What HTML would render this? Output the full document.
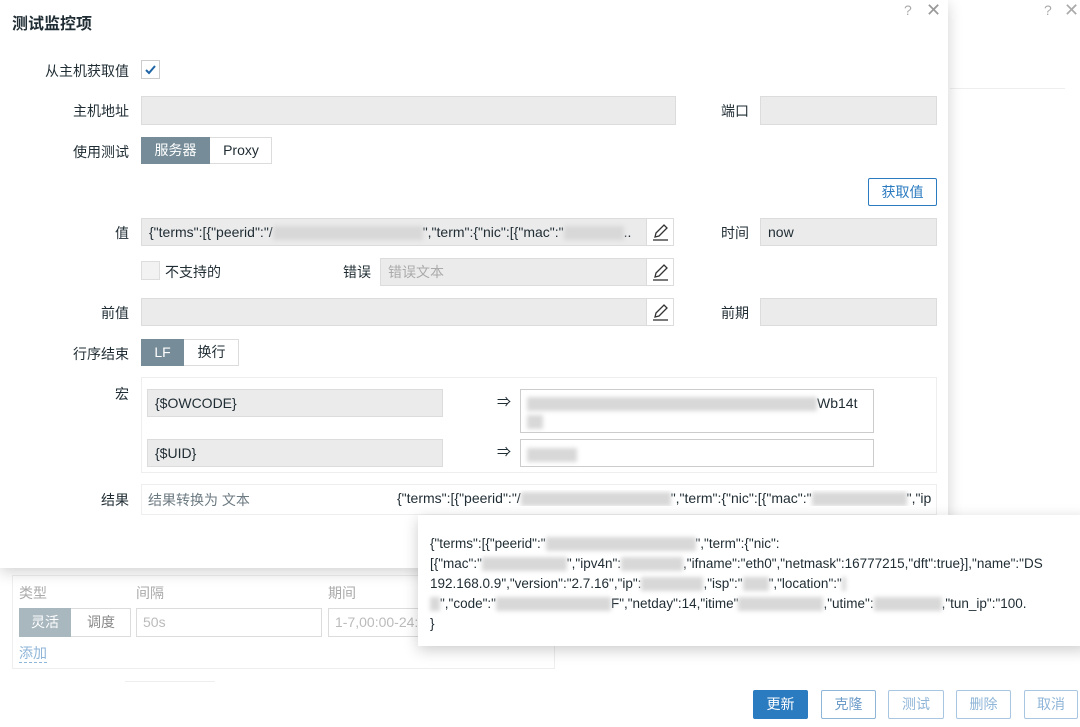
<!DOCTYPE html>
<html><head><meta charset="utf-8"><style>
*{box-sizing:border-box;margin:0;padding:0}
body{width:1080px;height:727px;overflow:hidden;background:#fff;font-family:"Liberation Sans","Noto Sans CJK SC",sans-serif;font-size:14px;color:#1f2c33;position:relative}
.a{position:absolute}
.lbl{position:absolute;text-align:right;width:120px;left:9px;font-size:14px;color:#1f2c33}
.inp{position:absolute;background:#ebebeb;border:1px solid #dcdcdc;height:28px;font-size:14px;line-height:26px;padding-left:7px;color:#1f2c33;white-space:nowrap;overflow:hidden}
.ed{position:absolute;width:28px;height:28px;border:1px solid #dcdcdc;background:#fff}
.btn{position:absolute;height:28px;border:1px solid #2b7bc0;color:#2b7bc0;background:#fff;border-radius:2px;text-align:center;line-height:26px;font-size:14px}
.blur{display:inline-block;height:14px;background:#d8d8d8;vertical-align:middle;filter:blur(2px)}
</style></head><body>
<div class="a" style="left:1044px;top:2px;color:#aaa;font-size:14px">?</div>
<div class="a" style="left:1064px;top:0px;color:#aaa;font-size:18px">✕</div>
<div class="a" style="left:950px;top:88px;width:115px;height:1px;background:#eee"></div>

<div class="a" style="left:12px;top:575px;width:543px;height:94px;border:1px solid #eee"></div>
<div class="a" style="left:19px;top:583px;color:#aaa">类型</div>
<div class="a" style="left:136px;top:583px;color:#aaa">间隔</div>
<div class="a" style="left:328px;top:583px;color:#aaa">期间</div>
<div class="a" style="left:19px;top:608px;width:112px;height:29px;border:1px solid #dcdcdc;background:#fff"></div>
<div class="a" style="left:19px;top:608px;width:52px;height:29px;background:#a9b7bf;color:#fff;text-align:center;line-height:29px">灵活</div>
<div class="a" style="left:71px;top:608px;width:60px;height:29px;color:#888;text-align:center;line-height:29px">调度</div>
<div class="a" style="left:136px;top:608px;width:186px;height:29px;border:1px solid #dcdcdc;color:#bbb;line-height:27px;padding-left:6px">50s</div>
<div class="a" style="left:328px;top:608px;width:100px;height:29px;border:1px solid #dcdcdc;color:#bbb;line-height:27px;padding-left:6px">1-7,00:00-24:</div>
<div class="a" style="left:19px;top:644px;color:#8fb5d8;border-bottom:1px dashed #8fb5d8;line-height:18px">添加</div>
<div class="a" style="left:125px;top:681px;width:90px;height:1px;background:#eee"></div>

<div class="a" style="left:753px;top:690px;width:55px;height:29px;background:#2b7bc0;color:#fff;text-align:center;line-height:29px;border-radius:2px">更新</div>
<div class="btn" style="left:821px;top:690px;width:55px;height:29px;color:#6d9cc9;border-color:#8fb5d8">克隆</div>
<div class="btn" style="left:888px;top:690px;width:56px;height:29px;color:#8fb5d8;border-color:#a8c6e2">测试</div>
<div class="btn" style="left:956px;top:690px;width:55px;height:29px;color:#8fb5d8;border-color:#a8c6e2">删除</div>
<div class="btn" style="left:1024px;top:690px;width:54px;height:29px;color:#8fb5d8;border-color:#a8c6e2">取消</div>

<div class="a" style="left:0;top:0;width:948px;height:568px;background:#fff;box-shadow:0 4px 14px rgba(0,0,0,.18)">
<div class="a" style="left:12px;top:10px;font-size:16px;font-weight:bold">测试监控项</div>
<div class="a" style="left:904px;top:2px;color:#aaa">?</div>
<div class="a" style="left:926px;top:0px;color:#999;font-size:18px">✕</div>

<div class="lbl" style="top:61px">从主机获取值</div>
<div class="a" style="left:141px;top:60px;width:19px;height:19px;border:1px solid #ccc;background:#fff"><svg width="17" height="17"><path d="M4 9l3 3 6-7" stroke="#1f65a6" stroke-width="2" fill="none"/></svg></div>

<div class="lbl" style="top:101px">主机地址</div>
<div class="inp" style="left:141px;top:96px;width:535px;height:29px"></div>
<div class="a" style="left:721px;top:101px">端口</div>
<div class="inp" style="left:760px;top:96px;width:177px;height:29px"></div>

<div class="lbl" style="top:142px">使用测试</div>
<div class="a" style="left:141px;top:137px;width:131px;height:27px;border:1px solid #dcdcdc"></div>
<div class="a" style="left:141px;top:137px;width:69px;height:27px;background:#768d99;color:#fff;text-align:center;line-height:27px">服务器</div>
<div class="a" style="left:210px;top:137px;width:62px;height:27px;text-align:center;line-height:27px">Proxy</div>

<div class="btn" style="left:868px;top:178px;width:69px">获取值</div>

<div class="lbl" style="top:223px">值</div>
<div class="inp" style="left:141px;top:218px;width:506px">{"terms":[{"peerid":"/<span class="blur" style="width:150px"></span>","term":{"nic":[{"mac":"<span class="blur" style="width:60px"></span>..</div>
<div class="ed" style="left:646px;top:218px"><svg width="26" height="26"><path d="M8 18l1-4 8-8 3 3-8 8z" fill="none" stroke="#333" stroke-width="1.3"/><path d="M6 21h15" stroke="#333" stroke-width="1.3"/></svg></div>
<div class="a" style="left:721px;top:223px">时间</div>
<div class="inp" style="left:760px;top:218px;width:177px">now</div>

<div class="a" style="left:141px;top:261px;width:19px;height:19px;border:1px solid #ddd;background:#f2f2f2"></div>
<div class="a" style="left:165px;top:262px">不支持的</div>
<div class="a" style="left:343px;top:262px">错误</div>
<div class="inp" style="left:380px;top:258px;width:267px;color:#aaa">错误文本</div>
<div class="ed" style="left:646px;top:258px"><svg width="26" height="26"><path d="M8 18l1-4 8-8 3 3-8 8z" fill="none" stroke="#333" stroke-width="1.3"/><path d="M6 21h15" stroke="#333" stroke-width="1.3"/></svg></div>

<div class="lbl" style="top:303px">前值</div>
<div class="inp" style="left:141px;top:298px;width:506px"></div>
<div class="ed" style="left:646px;top:298px"><svg width="26" height="26"><path d="M8 18l1-4 8-8 3 3-8 8z" fill="none" stroke="#333" stroke-width="1.3"/><path d="M6 21h15" stroke="#333" stroke-width="1.3"/></svg></div>
<div class="a" style="left:721px;top:303px">前期</div>
<div class="inp" style="left:760px;top:298px;width:177px"></div>

<div class="lbl" style="top:344px">行序结束</div>
<div class="a" style="left:141px;top:339px;width:98px;height:27px;border:1px solid #dcdcdc"></div>
<div class="a" style="left:141px;top:339px;width:43px;height:27px;background:#768d99;color:#fff;text-align:center;line-height:27px">LF</div>
<div class="a" style="left:184px;top:339px;width:55px;height:27px;text-align:center;line-height:27px">换行</div>

<div class="lbl" style="top:384px">宏</div>
<div class="a" style="left:141px;top:377px;width:796px;height:96px;border:1px solid #eee"></div>
<div class="inp" style="left:147px;top:389px;width:296px">{$OWCODE}</div>
<div class="a" style="left:497px;top:392px">⇒</div>
<div class="a" style="left:520px;top:389px;width:354px;height:44px;border:1px solid #ccc;background:#fff;padding:4px 6px;line-height:18px;white-space:nowrap;overflow:hidden"><span class="blur" style="width:290px"></span>Wb14t<br><span class="blur" style="width:16px"></span></div>
<div class="inp" style="left:147px;top:439px;width:296px">{$UID}</div>
<div class="a" style="left:497px;top:442px">⇒</div>
<div class="a" style="left:520px;top:439px;width:354px;height:28px;border:1px solid #ccc;background:#fff;padding:6px 6px"><span class="blur" style="width:50px"></span></div>

<div class="lbl" style="top:490px">结果</div>
<div class="a" style="left:141px;top:484px;width:796px;height:31px;border:1px solid #eee"></div>
<div class="a" style="left:148px;top:490px;color:#6c7a82">结果转换为 文本</div>
<div class="a" style="left:397px;top:490px;width:535px;white-space:nowrap;overflow:hidden">{"terms":[{"peerid":"/<span class="blur" style="width:150px"></span>","term":{"nic":[{"mac":"<span class="blur" style="width:95px"></span>","ip</div>
</div>

<div class="a" style="left:418px;top:515px;width:670px;height:131px;background:#fff;box-shadow:0 4px 14px rgba(0,0,0,.2);padding:19px 12px;font-size:13.5px;line-height:20px;white-space:nowrap;overflow:hidden">
{"terms":[{"peerid":"<span class="blur" style="width:150px"></span>","term":{"nic":<br>
[{"mac":"<span class="blur" style="width:85px"></span>","ipv4n":<span class="blur" style="width:62px"></span>,"ifname":"eth0","netmask":16777215,"dft":true}],"name":"DS<br>
192.168.0.9","version":"2.7.16","ip":<span class="blur" style="width:62px"></span>,"isp":"<span class="blur" style="width:26px"></span>","location":"<span class="blur" style="width:4px"></span><br>
<span class="blur" style="width:10px"></span>","code":"<span class="blur" style="width:115px"></span>F","netday":14,"itime"<span class="blur" style="width:85px"></span>,"utime":<span class="blur" style="width:68px"></span>,"tun_ip":"100.<br>
}
</div>
</body></html>
